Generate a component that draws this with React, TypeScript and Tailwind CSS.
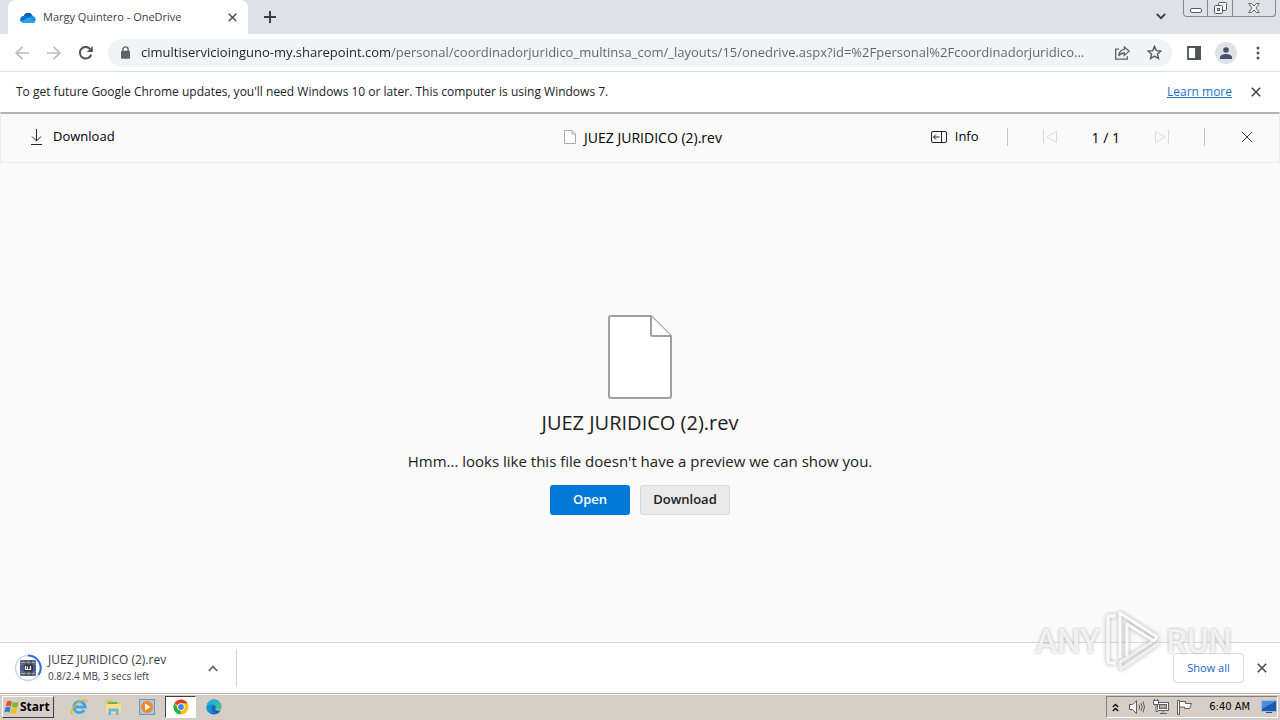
import type { ReactNode } from 'react'

const ui = "font-['Open_Sans','Noto_Sans',sans-serif]"

const url =
  'cimultiservicioinguno-my.sharepoint.com/personal/coordinadorjuridico_multinsa_com/_layouts/15/onedrive.aspx?id=%2Fpersonal%2Fcoordinadorjuridico...'

function IconButton({ label, className = '', children }: { label: string; className?: string; children: ReactNode }) {
  return (
    <button type="button" aria-label={label} className={`flex shrink-0 items-center justify-center ${className}`}>
      {children}
    </button>
  )
}

function Cross({ size, width = 1.6, color = '#45494d' }: { size: number; width?: number; color?: string }) {
  return (
    <svg width={size} height={size} viewBox="0 0 10 10" fill="none" stroke={color} strokeWidth={width}>
      <path d="M.8.8l8.4 8.4M9.2.8L.8 9.2" />
    </svg>
  )
}

function CloudIcon() {
  return (
    <svg width="16" height="11" viewBox="0 0 16 11">
      <path d="M4 4.2A4.6 4.6 0 0 1 12.6 4 3.6 3.6 0 0 1 13 11H3.5A3.4 3.4 0 0 1 4 4.2z" fill="#1490df" />
      <path d="M3.6 4.2A4.6 4.6 0 0 1 12.4 4C10.9 4 9.8 4.6 9 5.4L6.4 4.3z" fill="#0f5fb5" />
      <path d="M3.6 4.1c1.5-.2 2.8.1 4.2 1L3 9.6.9 9.4A3.4 3.4 0 0 1 3.6 4.1z" fill="#1273cc" />
      <path d="M1 9.5l8.2-4 5.8 4.4A3 3 0 0 1 13 11H3.5A3.3 3.3 0 0 1 1 9.5z" fill="#28a8ea" />
    </svg>
  )
}

function TabStrip() {
  return (
    <header className="flex h-[34px] shrink-0 bg-[#dee1e6] pl-2">
      <div className="flex w-60 items-center rounded-t-lg bg-white pr-2 pl-3">
        <CloudIcon />
        <span className="ml-[7px] flex-1 text-[11px] text-[#3c4043]">Margy Quintero - OneDrive</span>
        <IconButton label="Close tab" className="size-4">
          <Cross size={9} />
        </IconButton>
      </div>
      <IconButton label="New tab" className="ml-2 w-7">
        <svg width="12" height="12" viewBox="0 0 12 12" stroke="#3c4043" strokeWidth="2">
          <path d="M6 0v12M0 6h12" />
        </svg>
      </IconButton>
      <div className="flex flex-1 items-start justify-end pr-1">
        <IconButton label="Search tabs" className="mr-2.5 h-8 w-6">
          <svg width="10" height="7" viewBox="0 0 10 7" fill="none" stroke="#3c4043" strokeWidth="1.8">
            <path d="M.8 1L5 5.2 9.2 1" />
          </svg>
        </IconButton>
        <div className="flex h-[17px] rounded-b-[4px] border border-t-0 border-[#85888d] text-[#55585d]">
          <IconButton label="Minimize" className="w-6 border-r border-[#85888d]">
            <svg width="12" height="16" viewBox="0 0 12 16" fill="#fff" stroke="currentColor">
              <rect x=".5" y="8.5" width="11" height="4" rx="1.5" />
            </svg>
          </IconButton>
          <IconButton label="Restore" className="w-[25px] border-r border-[#85888d]">
            <svg width="13" height="16" viewBox="0 0 13 16" fill="#f4f5f7" stroke="currentColor">
              <rect x="4.5" y="2.5" width="8" height="8" rx="1" />
              <rect x=".5" y="5.5" width="8" height="8" rx="1" />
              <rect x="3.5" y="8.5" width="2" height="2" />
            </svg>
          </IconButton>
          <IconButton label="Close window" className="w-[42px]">
            <svg width="12" height="16" viewBox="0 0 12 16" fill="#f4f5f7" stroke="currentColor" strokeWidth=".9">
              <path d="M.6 3.5h3L6 6l2.4-2.5h3L8 8l3.4 4.5h-3L6 10l-2.4 2.5h-3L4 8z" />
            </svg>
          </IconButton>
        </div>
      </div>
    </header>
  )
}

function AddressBar() {
  return (
    <nav className="flex h-[37px] shrink-0 items-center bg-white px-2 text-[#5f6368]">
      <IconButton label="Back" className="h-7 w-7">
        <svg width="14" height="14" viewBox="0 0 14 14" fill="none" stroke="#babcbe" strokeWidth="1.7">
          <path d="M14 7H1.5M7.4.8L1.2 7l6.2 6.2" />
        </svg>
      </IconButton>
      <IconButton label="Forward" className="ml-1 h-7 w-7">
        <svg width="14" height="14" viewBox="0 0 14 14" fill="none" stroke="#babcbe" strokeWidth="1.7">
          <path d="M0 7h12.5M6.6.8L12.8 7l-6.2 6.2" />
        </svg>
      </IconButton>
      <IconButton label="Reload" className="ml-1 h-7 w-7">
        <svg width="14" height="14" viewBox="0 0 14 14">
          <path d="M12.2 8.6A5.8 5.8 0 1 1 11 2.8" fill="none" stroke="#505357" strokeWidth="2" />
          <path d="M13.8 0v6H7.8z" fill="#505357" />
        </svg>
      </IconButton>
      <div className="ml-2 flex h-7 min-w-0 flex-1 items-center rounded-full bg-[#f1f3f4] pr-0.5 pl-3">
        <svg width="11" height="13" viewBox="0 0 11 13" className="shrink-0">
          <path d="M2.9 5V3.5a2.6 2.6 0 0 1 5.2 0V5" fill="none" stroke="#5f6368" strokeWidth="1.4" />
          <rect x="1" y="4.8" width="9" height="8" rx="1" fill="#5f6368" />
        </svg>
        <input
          aria-label="Address"
          defaultValue={url}
          className="ml-2.5 min-w-0 flex-1 bg-[linear-gradient(90deg,#202124_249px,#5f6368_249px)] bg-clip-text text-[13px] text-transparent outline-none"
        />
        <IconButton label="Share" className="h-7 w-8">
          <svg width="15" height="14" viewBox="0 0 15 14" fill="none" stroke="#5f6368" strokeWidth="1.3">
            <path d="M4 3.2H.7v10h11.6v-3" />
            <path d="M9.3 1l4.9 4.2-4.9 4.2V7C6.600 7 5 7.900 3.700 9.800 4.100 6.300 6 3.800 9.300 3.400z" />
          </svg>
        </IconButton>
        <IconButton label="Bookmark" className="h-7 w-8">
          <svg width="15" height="15" viewBox="0 0 15 15" fill="none" stroke="#55595e" strokeWidth="1.4">
            <path d="M7.500 1.400l1.800 4.200 4.600.4-3.500 3 1.100 4.500-4-2.400-4 2.400 1.100-4.500-3.500-3 4.600-.4z" />
          </svg>
        </IconButton>
      </div>
      <IconButton label="Side panel" className="ml-2 h-7 w-7">
        <svg width="14" height="14" viewBox="0 0 14 14" fill="none" stroke="#505357" strokeWidth="1.8">
          <path d="M1 1h12v12H1z" />
          <path d="M9 1h4v12H9z" fill="#505357" />
        </svg>
      </IconButton>
      <IconButton label="Profile" className="ml-[7px] size-[22px] rounded-full bg-[#dee1e6]">
        <svg width="12" height="12" viewBox="0 0 12 12" fill="#46536d">
          <circle cx="6" cy="3" r="2.800" />
          <path d="M0 12v-1.800C0 8 4 7 6 7s6 1 6 3.200V12z" />
        </svg>
      </IconButton>
      <IconButton label="Menu" className="ml-[7px] h-7 w-7">
        <svg width="4" height="14" viewBox="0 0 4 14" fill="#505357">
          <circle cx="2" cy="2" r="1.500" />
          <circle cx="2" cy="7" r="1.500" />
          <circle cx="2" cy="12" r="1.500" />
        </svg>
      </IconButton>
    </nav>
  )
}

function UpdateNotice() {
  return (
    <div className="flex h-[41px] shrink-0 items-center border-t border-[#dcdee0] bg-white pr-4 pl-4 text-[12px] text-[#202124]">
      <p className="flex-1">To get future Google Chrome updates, you'll need Windows 10 or later. This computer is using Windows 7.</p>
      <a href="#learn-more" className="text-[#1a73c8] underline">
        Learn more
      </a>
      <IconButton label="Dismiss notice" className="ml-4 size-4">
        <Cross size={10} />
      </IconButton>
    </div>
  )
}

function ViewerToolbar() {
  return (
    <div className="grid h-[51px] shrink-0 grid-cols-[1fr_auto_1fr] items-center border-t-2 border-r border-b border-l border-[#ececec] border-t-[#b4b4b4] bg-[#fafafa] pr-[22px] pb-0.5 pl-7 text-[13px] text-black">
      <button type="button" className="flex items-center gap-2.5 justify-self-start">
        <svg width="14" height="16" viewBox="0 0 14 16" fill="none" stroke="#222">
          <path d="M7.500 0v12M3 7.500l4.500 4.500L12 7.500M2 15.500h11" />
        </svg>
        Download
      </button>
      <div className="flex items-center gap-2">
        <svg width="12" height="14" viewBox="0 0 12 14" fill="#fff" stroke="#aaa">
          <path d="M.5.5h7.500l3.500 3.500v9.500H.5zM8 .5V4h3.500" />
        </svg>
        <h1 className="text-[14px]">JUEZ JURIDICO (2).rev</h1>
      </div>
      <div className="flex items-center justify-end">
        <button type="button" className="flex items-center gap-2">
          <svg width="16" height="12" viewBox="0 0 16 12" fill="none" stroke="#222">
            <rect x=".5" y=".5" width="15" height="11" rx="1.500" />
            <path d="M10.500.5v11M8.500 6h-6M5 3.500L2.500 6 5 8.500" />
          </svg>
          Info
        </button>
        <span className="ml-7 h-[18px] w-px bg-[#c4c4c4]" />
        <IconButton label="Previous" className="ml-8 size-5">
          <svg width="14" height="14" viewBox="0 0 14 14" fill="none" stroke="#dcdcdc">
            <path d="M.5 0v14M13.500 1.500v11L4 7z" />
          </svg>
        </IconButton>
        <span className="ml-8 text-[14px]">1 / 1</span>
        <IconButton label="Next" className="ml-8 size-5">
          <svg width="14" height="14" viewBox="0 0 14 14" fill="none" stroke="#dcdcdc">
            <path d="M13.500 0v14M.5 1.500v11L10 7z" />
          </svg>
        </IconButton>
        <span className="ml-8 h-[18px] w-px bg-[#c4c4c4]" />
        <IconButton label="Close viewer" className="ml-8 size-5">
          <Cross size={12} width={0.8} color="#333" />
        </IconButton>
      </div>
    </div>
  )
}

function Preview() {
  return (
    <main className="flex min-h-0 flex-1 flex-col items-center justify-center bg-[#fafafa] pt-6 text-[#212121]">
      <svg width="66" height="84" viewBox="0 0 66 84" fill="#fff" stroke="#a0a0a0" strokeWidth="2" strokeLinejoin="round">
        <path d="M4 1h40l20 20v60a2 2 0 0 1-2 2H4a2 2 0 0 1-2-2V3a2 2 0 0 1 2-2z" />
        <path d="M44 1v18.500a1.500 1.500 0 0 0 1.500 1.500H64" />
      </svg>
      <h2 className="mt-2 text-[20px] leading-8">JUEZ JURIDICO (2).rev</h2>
      <p className="mt-2.5 text-[15px] leading-6">Hmm... looks like this file doesn't have a preview we can show you.</p>
      <div className="mt-3 flex gap-2.5 text-[13px] font-semibold">
        <button type="button" className="h-[30px] w-20 rounded-[3px] bg-[#0078d7] text-white">
          Open
        </button>
        <button type="button" className="h-[30px] w-[90px] rounded-[3px] border border-[#d8d8d8] bg-[#eaeaea] text-[#212121]">
          Download
        </button>
      </div>
    </main>
  )
}

function ArchiveIcon() {
  return (
    <svg width="28" height="28" viewBox="0 0 28 28" className="shrink-0">
      <circle cx="14" cy="14" r="12.500" fill="none" stroke="#c5d4f0" strokeWidth="1.500" />
      <path d="M14 1.500A12.500 12.500 0 0 1 24.500 21" fill="none" stroke="#2f6fd8" strokeWidth="2" />
      <rect x="6" y="6" width="16" height="5" rx="1" fill="#626875" />
      <rect x="6" y="11" width="16" height="6" fill="#4a5aa6" />
      <rect x="6" y="17" width="16" height="5" rx="1" fill="#626875" />
      <path d="M6.500 8.500h15M6.500 19.500h15" stroke="#9da3ae" />
      <path d="M12 6v16M17 6v16" stroke="#3c4350" />
      <rect x="10" y="10.500" width="9" height="7" fill="#303746" />
      <path d="M11.500 12v3.500h2V12.500m0 3h3V12" fill="none" stroke="#fff" strokeWidth="1.200" />
    </svg>
  )
}

function DownloadShelf() {
  return (
    <section aria-label="Downloads" className="flex h-[51px] shrink-0 items-center border-t border-[#d5d7da] bg-white pr-2.5 pl-3.5 text-[#3c4043]">
      <ArchiveIcon />
      <div className="ml-1.5 w-[147px]">
        <p className="text-[12px] leading-4">JUEZ JURIDICO (2).rev</p>
        <p className="text-[10px] leading-4">0.8/2.4 MB, 3 secs left</p>
      </div>
      <IconButton label="Download options" className="ml-1 size-7">
        <svg width="10" height="7" viewBox="0 0 10 7" fill="none" stroke="#5f6368" strokeWidth="1.700">
          <path d="M.8 6L5 1.500 9.200 6" />
        </svg>
      </IconButton>
      <span className="ml-[9px] h-[38px] w-px bg-[#d0d2d5]" />
      <button type="button" className="ml-auto h-[30px] w-[71px] rounded-[4px] border border-[#dadce0] text-[11px] text-[#1a67c8]">
        Show all
      </button>
      <IconButton label="Close downloads bar" className="ml-2.5 size-4">
        <Cross size={10} />
      </IconButton>
    </section>
  )
}

function WindowsFlag() {
  return (
    <svg width="16" height="15" viewBox="0 0 17 16" className="shrink-0">
      <path d="M3 1.500C5 .3 6.800.8 8.500 1.800L7.300 7C5.500 6 3.800 5.900 1.800 7z" fill="#e8542a" />
      <path d="M9.500 2.200c2 .9 4 .9 6 0L14.300 7.500c-2 1-4 .900-6 0z" fill="#7ab82c" />
      <path d="M1.500 8c2-1.200 3.800-1 5.500 0L5.800 13.200C4 12.200 2.300 12.200.3 13.300z" fill="#2f7fd6" />
      <path d="M8 8.500c2 .9 4 .9 6 0l-1.200 5.300c-2 1-4 .9-6 0z" fill="#f6bd1b" />
    </svg>
  )
}

function Taskbar() {
  return (
    <footer className="flex h-[27px] shrink-0 items-center border-t border-[#c0bbb4] bg-[#d5cec6] pr-0.5 pl-0.5 font-['DejaVu_Sans_Condensed','DejaVu_Sans',sans-serif] text-[11px] text-black shadow-[inset_0_1px_0_#f5f3f0]">
      <button type="button" className="flex h-[22px] w-[52px] items-center border border-t-white border-r-[#404040] border-b-[#404040] border-l-white pl-px font-['Open_Sans',sans-serif] text-[12px] font-bold">
        <WindowsFlag />
        Start
      </button>
      <IconButton label="Internet Explorer" className="ml-2.5 w-[30px]">
        <svg width="18" height="18" viewBox="0 0 18 18" fill="none">
          <path d="M14.200 12A5.600 5.600 0 1 1 15 9H4.500" stroke="#3ba7e4" strokeWidth="2.800" />
          <path d="M2.500 16.500C-.5 15 3 8 8 4.500 12 1.500 17 0 16.500 4.500" stroke="#e9b52c" strokeWidth="1.500" />
        </svg>
      </IconButton>
      <IconButton label="File Explorer" className="ml-1 w-[30px]">
        <svg width="17" height="16" viewBox="0 0 17 16">
          <path d="M1 1h6l1 1.500h7V13H1z" fill="#e8c65a" />
          <path d="M3 3h9v2H3z" fill="#5bb55b" />
          <path d="M1 5h15v9H1z" fill="#f8e08a" />
          <path d="M3.500 16V9.500h10V16H11v-3.500H6V16z" fill="#6db5e6" />
        </svg>
      </IconButton>
      <IconButton label="Media Player" className="ml-1 w-[30px]">
        <svg width="16" height="16" viewBox="0 0 16 16">
          <rect x=".5" y=".5" width="15" height="15" fill="#a9c9e8" stroke="#7395ba" />
          <circle cx="8" cy="8" r="6" fill="#f08a1c" />
          <path d="M6 4.500v7L11.500 8z" fill="#fff" />
        </svg>
      </IconButton>
      <IconButton label="Google Chrome" className="ml-[3px] h-[22px] w-[31px] border border-t-[#404040] border-r-white border-b-white border-l-[#404040] bg-white">
        <svg width="16" height="16" viewBox="0 0 16 16">
          <circle cx="8" cy="8" r="7.500" fill="#fbc116" />
          <path d="M8 8L1.500 4.250A7.500 7.500 0 0 1 14.500 4.250H8z" fill="#e33b2e" />
          <path d="M1.500 4.250L4.750 9.900 8 11.500l-.8 4A7.500 7.500 0 0 1 1.500 4.250z" fill="#2da94f" />
          <circle cx="8" cy="8" r="3.700" fill="#fff" />
          <circle cx="8" cy="8" r="2.900" fill="#4285f4" />
        </svg>
      </IconButton>
      <IconButton label="Microsoft Edge" className="ml-[3px] w-[30px]">
        <svg width="16" height="16" viewBox="0 0 16 16">
          <circle cx="8" cy="8" r="7.500" fill="#1468b8" />
          <path d="M.7 7A7.500 7.500 0 0 1 15.500 7.500c0 2.500-2 3.500-4.500 3-1.500-.4-1.300-1-.9-2C10.500 6 7 4.500.7 7z" fill="#38c48d" />
          <path d="M.7 7A7.500 7.500 0 0 1 8 .5c3 .8 4 4 2.500 6.500C8.500 4.800 4 5 .7 7z" fill="#22b2d8" />
          <path d="M.5 8.500C1.500 5 7 4.500 8.500 6.500 5 6.500 4.500 11 7.500 13.800 3 15 0 12 .5 8.500z" fill="#1690d8" />
          <path d="M9.800 8c-1.300 2.500 1.200 4.500 5 3.200l1-.2V8c-.5 2.200-2.500 2.900-4.800 2.500-1.500-.4-1.400-1.300-1.200-2.500z" fill="#d5cec6" />
        </svg>
      </IconButton>
      <div className="ml-auto flex h-[22px] items-center border border-t-[#85807a] border-r-white border-b-white border-l-[#85807a] pl-1">
        <IconButton label="Show hidden icons" className="w-2">
          <svg width="7" height="9" viewBox="0 0 7 9" fill="none" stroke="#000" strokeWidth="1.300">
            <path d="M.8 4l2.700-2.500L6.200 4M.8 8l2.700-2.500L6.200 8" />
          </svg>
        </IconButton>
        <IconButton label="Volume" className="ml-2.5 w-4">
          <svg width="16" height="14" viewBox="0 0 16 14" fill="#fff" stroke="#5e5e5e">
            <path d="M.5 4.500h3l4-4v13l-4-4h-3z" />
            <path d="M10 4.500q1.500 2.500 0 5M12 3q2.500 4 0 8M14 1.500q3 5.500 0 11" fill="none" />
          </svg>
        </IconButton>
        <IconButton label="Network" className="ml-2 w-4">
          <svg width="16" height="16" viewBox="0 0 16 16" fill="#fff" stroke="#5e5e5e">
            <rect x="4.500" y="3.500" width="11" height="8" />
            <rect x="6.500" y="5.500" width="7" height="4" fill="#aaa" />
            <path d="M10 11.500v2M7 14.500h7" />
            <path d="M.5 1.500h5v4h-5zM1.500 0v2M4.500 0v2M3 5.500v7h2" />
          </svg>
        </IconButton>
        <IconButton label="Action Center" className="ml-2 w-4">
          <svg width="16" height="15" viewBox="0 0 16 15" fill="#fff" stroke="#5e5e5e">
            <path d="M2.500 1.500h6v2h6l-2 5h-5v-1.500h-5z" />
            <path d="M.5.5h2v14h-2z" />
          </svg>
        </IconButton>
        <time className="ml-4">6:40 AM</time>
        <IconButton label="Show desktop" className="ml-[11px] w-4">
          <svg width="16" height="14" viewBox="0 0 16 14">
            <path d="M.5.5h15v11H.5z" fill="#1c58b0" stroke="#9dbce0" />
            <path d="M1 1h14L1 9z" fill="#4a8ee0" />
            <path d="M5 12.500h6" stroke="#274a7c" />
          </svg>
        </IconButton>
      </div>
    </footer>
  )
}

function Watermark() {
  return (
    <div className="pointer-events-none absolute right-12 bottom-[46px] flex items-center font-[Roboto,sans-serif] text-[33px] leading-none font-medium text-white/80 [text-shadow:0_0_3px_#a8a8a8]">
      <span>ANY</span>
      <svg width="58" height="66" viewBox="0 0 58 66" fill="none" strokeLinejoin="round" className="mx-1 drop-shadow-[0_0_2px_#a0a0a0]">
        <path d="M12 8H6q-2 0-2 3v41q0 3 3 3h5" stroke="#fff" strokeWidth="3.500" strokeOpacity=".85" />
        <path d="M16 50V5l37 24-3 4-27-17v32" stroke="#fff" strokeWidth="3" strokeOpacity=".9" />
        <path d="M55 35L17 61l-1-7 32-20" stroke="#f6f6f6" strokeWidth="3" strokeOpacity=".85" />
      </svg>
      <span>RUN</span>
    </div>
  )
}

export default function App() {
  return (
    <div className={`relative flex h-screen flex-col overflow-hidden ${ui}`}>
      <TabStrip />
      <AddressBar />
      <UpdateNotice />
      <ViewerToolbar />
      <Preview />
      <DownloadShelf />
      <Taskbar />
      <Watermark />
    </div>
  )
}
